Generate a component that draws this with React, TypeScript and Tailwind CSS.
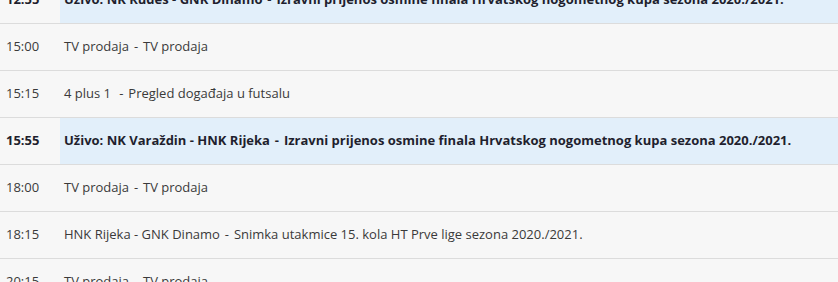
type Show = {
  time: string;
  title: string;
  desc: string;
  live?: boolean;
};

const shows: Show[] = [
  {
    time: '12:55',
    title: 'Uživo: NK Rudeš - GNK Dinamo',
    desc: 'Izravni prijenos osmine finala Hrvatskog nogometnog kupa sezona 2020./2021.',
    live: true,
  },
  { time: '15:00', title: 'TV prodaja', desc: 'TV prodaja' },
  { time: '15:15', title: '4 plus 1 ', desc: 'Pregled događaja u futsalu' },
  {
    time: '15:55',
    title: 'Uživo: NK Varaždin - HNK Rijeka',
    desc: 'Izravni prijenos osmine finala Hrvatskog nogometnog kupa sezona 2020./2021.',
    live: true,
  },
  { time: '18:00', title: 'TV prodaja', desc: 'TV prodaja' },
  {
    time: '18:15',
    title: 'HNK Rijeka - GNK Dinamo',
    desc: 'Snimka utakmice 15. kola HT Prve lige sezona 2020./2021.',
  },
  { time: '20:15', title: 'TV prodaja', desc: 'TV prodaja' },
];

export default function App() {
  return (
    <div className="h-[282px] w-[838px] overflow-hidden bg-[#f7f7f7] font-['Open_Sans',sans-serif] text-[13px] text-[#3a3a3a]">
      <div className="-mt-[23px]">
        {shows.map((s) => (
          <div
            key={s.time}
            className={`flex h-[47px] border-b border-[#dcdcdc] ${s.live ? 'font-bold text-[#1f1f2e]' : ''}`}
          >
            <div className="flex w-[60px] shrink-0 items-center pl-[6px]">{s.time}</div>
            <div
              className={`flex flex-1 items-center whitespace-pre pl-[4px] ${s.live ? 'bg-[#e2effa]' : ''}`}
            >
              {s.title}
              <span className="mx-[1.5px]"> - </span>
              {s.desc}
            </div>
          </div>
        ))}
      </div>
    </div>
  );
}
